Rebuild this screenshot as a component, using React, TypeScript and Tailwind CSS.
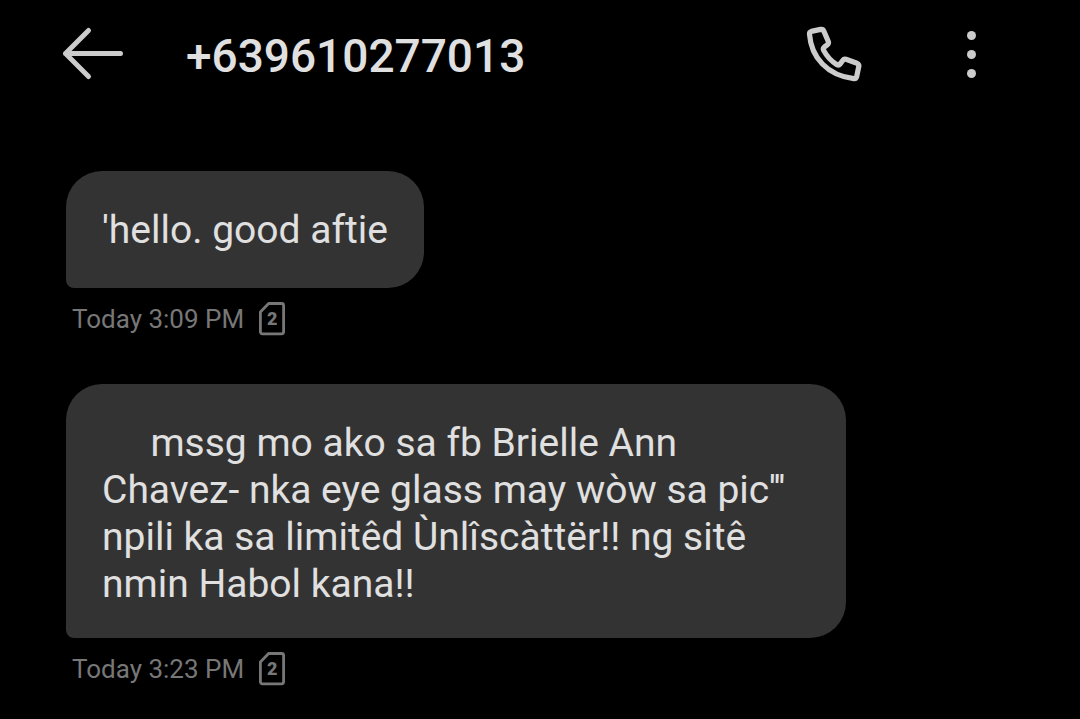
type Message = { id: number; text: string; time: string; sim: number };

const messages: Message[] = [
  { id: 1, text: "'hello. good aftie", time: "Today 3:09 PM", sim: 2 },
  {
    id: 2,
    text: "     mssg mo ako sa fb Brielle Ann Chavez- nka eye glass may wòw sa pic''' npili ka sa limitêd Ùnlîscàttër!! ng sitê nmin Habol kana!!",
    time: "Today 3:23 PM",
    sim: 2,
  },
];

function BackIcon() {
  return (
    <svg className="h-14 w-16" viewBox="0 0 64 56" fill="none" stroke="currentColor" strokeWidth="5" strokeLinecap="round" strokeLinejoin="round" aria-hidden="true">
      <path d="M60.5 27.5H5.5M28.5 4.5l-23 23 23 23" />
    </svg>
  );
}

function PhoneIcon() {
  return (
    <svg className="size-14" viewBox="0 0 56 56" fill="none" stroke="currentColor" strokeWidth="5.2" strokeLinejoin="round" aria-hidden="true">
      <path d="M5.3 5.4 14.6 3.4Q17 3 17.9 5.2L22.3 15.6Q23 17.5 21.5 18.6L18.2 21.1Q16.6 22.5 17.8 24.6Q22.5 33.5 31 38.7Q32.8 39.7 34 38.1L36.9 34.2Q38 32.6 40 33.3L51 37.3Q53.2 38.2 52.8 40.4L50.7 50.5Q50.2 52.8 47.8 52.6C21.5 49.5 5.2 31.5 3.5 8.2Q3.3 5.9 5.3 5.4Z" />
    </svg>
  );
}

function SimIcon({ slot }: { slot: number }) {
  return (
    <span className="grid place-items-center" role="img" aria-label={`SIM ${slot}`}>
      <svg className="col-start-1 row-start-1 h-[34px] w-[26px]" viewBox="0 0 26 34" fill="none" stroke="currentColor" strokeWidth="2.8" strokeLinejoin="round" aria-hidden="true">
        <path d="M9.6 1.5H22.6a2 2 0 0 1 2 2V29.8a2 2 0 0 1-2 2H3.4a2 2 0 0 1-2-2V10Z" />
      </svg>
      <span className="col-start-1 row-start-1 text-lg font-black leading-none">{slot}</span>
    </span>
  );
}

export default function App() {
  return (
    <div className="min-h-screen bg-black font-[Roboto,sans-serif] text-[#e0e0e0]">
      <header className="flex h-[108px] items-center pl-[60px] pr-[81px] text-[#ccc]">
        <button type="button" aria-label="Back"><BackIcon /></button>
        <h1 className="ml-[62px] flex-1 pt-1 text-[46px] font-medium text-[#e0e0e0]">+639610277013</h1>
        <button type="button" aria-label="Call"><PhoneIcon /></button>
        <button type="button" aria-label="More options" className="ml-[81px] flex w-14 flex-col items-center gap-2.5">
          <span className="size-[9px] rounded-full bg-current" />
          <span className="size-[9px] rounded-full bg-current" />
          <span className="size-[9px] rounded-full bg-current" />
        </button>
      </header>
      <main className="flex flex-col gap-[47px] px-[66px] pt-[63px]">
        {messages.map((m) => (
          <article key={m.id} className="flex flex-col items-start gap-[13px]">
            <p className="min-h-[117px] max-w-[780px] whitespace-pre-wrap rounded-[36px] rounded-bl-lg bg-[#333] px-9 pt-9 pb-[30px] text-[39px] leading-[47px]">{m.text}</p>
            <div className="flex items-center gap-[15px] pl-1.5 text-[26px] leading-9 text-[#777]">
              <time>{m.time}</time>
              <SimIcon slot={m.sim} />
            </div>
          </article>
        ))}
      </main>
    </div>
  );
}
